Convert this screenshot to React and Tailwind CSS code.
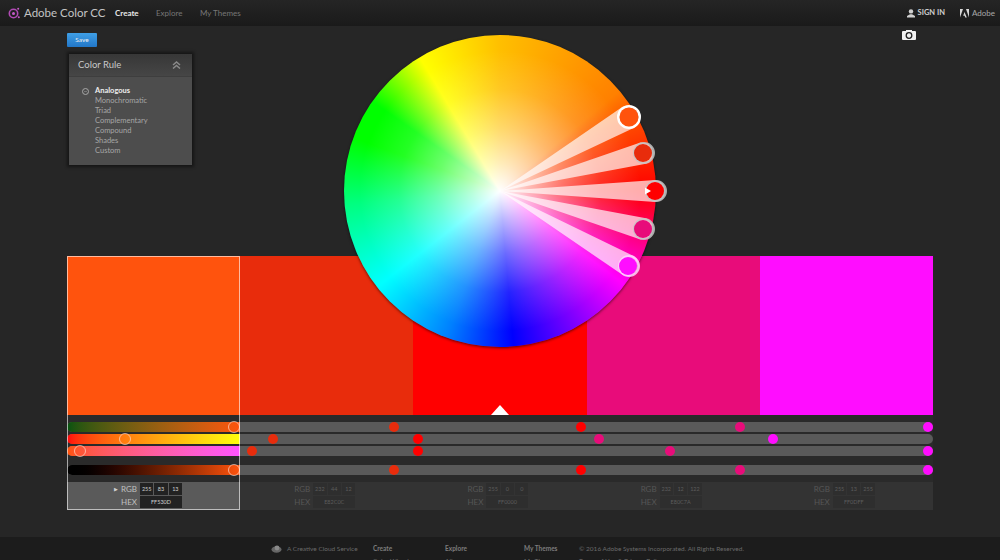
import React from "react";

const swatches = [
  { hex: "FF530D", rgb: [255, 83, 13], bg: "bg-[#ff530d]" },
  { hex: "E82C0C", rgb: [232, 44, 12], bg: "bg-[#e82c0c]" },
  { hex: "FF0000", rgb: [255, 0, 0], bg: "bg-[#ff0000]" },
  { hex: "E80C7A", rgb: [232, 12, 122], bg: "bg-[#e80c7a]" },
  { hex: "FF0DFF", rgb: [255, 13, 255], bg: "bg-[#ff0dff]" },
];

const rules = ["Analogous", "Monochromatic", "Triad", "Complementary", "Compound", "Shades", "Custom"];

// dot centres in px from the left edge of the slider track
const sliders = [
  { gradient: "bg-gradient-to-r from-[#005310] to-[#ff530d]", mt: "mt-[7px]", dots: [167, 327, 514, 673, 861] },
  { gradient: "bg-gradient-to-r from-[#ff000d] to-[#ffff0d]", mt: "mt-[2px]", dots: [58, 206, 351, 532, 706] },
  { gradient: "bg-gradient-to-r from-[#ff5300] to-[#ff53ff]", mt: "mt-[2px]", dots: [13, 185, 351, 603, 861] },
  { gradient: "bg-gradient-to-r from-[#000000] to-[#ff530d]", mt: "mt-[9px]", dots: [167, 327, 514, 673, 861] },
];
const dotColors = ["", "#e82c0c", "#ff0000", "#e80c7a", "#ff0dff"];

const handles = [
  { x: 129, y: -74, fill: "#ff530d", ring: "#ffffff", ringOpacity: 1, width: 2.5, fx: 0, r: 12 },
  { x: 144, y: -38, fill: "#e82c0c", ring: "#c4c4c4", ringOpacity: 0.85, width: 2, fx: -1, r: 11 },
  { x: 156, y: 0, fill: "#ff0000", ring: "#c4c4c4", ringOpacity: 0.85, width: 2, fx: -1, r: 11 },
  { x: 144, y: 38, fill: "#e80c7a", ring: "#c4c4c4", ringOpacity: 0.85, width: 2, fx: -1, r: 11 },
  { x: 129, y: 75, fill: "#ff0dff", ring: "#ffd0ff", ringOpacity: 0.85, width: 2, fx: -1, r: 11 },
];

const wedgePath = ({ x, y, r }) => {
  const d = Math.hypot(x, y);
  const a = Math.atan2(y, x);
  const half = Math.asin(r / d);
  const len = Math.sqrt(d * d - r * r);
  const ax = len * Math.cos(a - half);
  const ay = len * Math.sin(a - half);
  const bx = len * Math.cos(a + half);
  const by = len * Math.sin(a + half);
  return `M0 0L${ax} ${ay}A${r} ${r} 0 0 1 ${bx} ${by}Z`;
};

const Wheel = () => (
  <div className="absolute left-[344px] top-[35px] w-[312px] h-[312px] rounded-full shadow-[0_1px_3px_rgba(0,0,0,0.6)] bg-[conic-gradient(from_0deg,#ffbf00_0deg,#ff8000_50deg,#ff5300_60deg,#ff0000_90deg,#ff00ff_127deg,#8000ff_150deg,#0000ff_175deg,#0080ff_200deg,#00ffff_232deg,#00ff80_265deg,#00ff00_290deg,#00ff00_305deg,#ffff00_329deg,#ffbf00_360deg)]">
    <div className="w-full h-full rounded-full bg-[radial-gradient(circle_closest-side,rgba(255,255,255,1)_0%,rgba(255,255,255,0.72)_18%,rgba(255,255,255,0.42)_40%,rgba(255,255,255,0.14)_65%,rgba(255,255,255,0)_90%)]" />
    <svg className="absolute left-0 top-0 overflow-visible" width="312" height="312" viewBox="-156 -156 312 312">
      {handles.map((h) => (
        <path key={h.fill} d={wedgePath(h)} fill="#ffffff" fillOpacity="0.68" />
      ))}
      {handles.map((h) => (
        <g key={h.fill}>
          <circle cx={h.x} cy={h.y} r={h.r - h.width / 2} fill="none" stroke={h.ring} strokeOpacity={h.ringOpacity} strokeWidth={h.width} />
          <circle cx={h.x + h.fx} cy={h.y} r={h.r - h.width} fill={h.fill} />
        </g>
      ))}
      <path d="M145 -3.5L151 0L145 3.5Z" fill="#ffffff" />
    </svg>
  </div>
);

const NavLink = ({ children, active }) => (
  <span className={active ? "text-[#e8e8e8] font-bold" : "text-[#777777]"}>{children}</span>
);

const Header = () => (
  <div className="h-[26px] flex items-center justify-between bg-gradient-to-b from-[#252525] to-[#1a1a1a] text-[8px]">
    <div className="flex items-center">
      <svg className="ml-[8px]" width="12" height="14" viewBox="0 0 12 14">
        <circle cx="5.5" cy="7.5" r="4.2" fill="none" stroke="#b04ab4" strokeWidth="1.6" />
        <circle cx="5.5" cy="7.5" r="1.5" fill="#c65ac8" />
        <circle cx="10.2" cy="2.8" r="1" fill="#c65ac8" />
        <circle cx="10.8" cy="11.2" r="1" fill="#c65ac8" />
      </svg>
      <span className="ml-[4px] w-[91px] text-[11.5px] text-[#c4c4c4]">Adobe Color CC</span>
      <div className="w-[41px]"><NavLink active>Create</NavLink></div>
      <div className="w-[44px]"><NavLink>Explore</NavLink></div>
      <NavLink>My Themes</NavLink>
    </div>
    <div className="flex items-center mr-[5px]">
      <svg width="8" height="9" viewBox="0 0 8 9" fill="#d0d0d0">
        <circle cx="4" cy="2.4" r="2.2" />
        <path d="M0 8.5V7L3 5.2H5L8 7V8.5Z" />
      </svg>
      <span className="ml-[3px] text-[#d0d0d0] font-bold text-[7.5px]">SIGN IN</span>
      <svg className="ml-[15px]" width="9" height="9" viewBox="0 0 9 9" fill="#d8d8d8">
        <path d="M0 0H3L0 8.5Z" />
        <path d="M6 0H9V8.5Z" />
        <path d="M4.5 3L6.8 8.5H5.3L4.6 6.8H3.2Z" />
      </svg>
      <span className="ml-[3px] text-[#a8a8a8]">Adobe</span>
    </div>
  </div>
);

const ColorRule = () => (
  <div className="ml-[2px] mt-[7px] w-[123px] h-[111px] bg-[#4d4d4d] shadow-[0_0_3px_2px_rgba(0,0,0,0.45)]">
    <div className="h-[23px] flex items-center justify-between pl-[9px] pr-[11px] bg-gradient-to-b from-[#373737] to-[#464646] border-b border-[#3e3e3e]">
      <span className="text-[9.5px] text-[#c8c8c8]">Color Rule</span>
      <svg width="9" height="8" viewBox="0 0 9 8" fill="none" stroke="#8a8a8a" strokeWidth="1.5">
        <path d="M1 4L4.5 1L8 4" />
        <path d="M1 7.5L4.5 4.5L8 7.5" />
      </svg>
    </div>
    <div className="flex pl-[13px] pt-[9px]">
      <div className="w-[7px] h-[7px] mt-[2px] rounded-full border border-[#a8a8a8] flex items-center justify-center">
        <div className="w-[3px] h-[1px] bg-[#777777]" />
      </div>
      <ul className="ml-[6px] text-[7.5px] leading-[10px] text-[#a6a6a6]">
        {rules.map((rule, index) => (
          <li key={rule} className={index === 0 ? "text-[#eeeeee] font-bold" : ""}>{rule}</li>
        ))}
      </ul>
    </div>
  </div>
);

const Camera = () => (
  <svg className="-mt-[3px] mr-[17px]" width="14" height="10" viewBox="0 0 14 10">
    <rect x="0" y="1" width="14" height="9" rx="1" fill="#f2f2f2" />
    <rect x="4" y="0" width="6" height="2" fill="#f2f2f2" />
    <circle cx="7" cy="5.5" r="2.8" fill="none" stroke="#222222" strokeWidth="1.3" />
  </svg>
);

const Slider = ({ gradient, mt, dots }) => (
  <div className={`relative h-[10px] rounded-full bg-[#5a5a5a] ${mt}`}>
    <div className={`w-[173px] h-full rounded-l-full ${gradient}`} />
    {dots.map((left, index) => (
      <div
        key={left + "_" + index}
        className={
          index === 0
            ? "absolute -top-[1px] w-[12px] h-[12px] -ml-[6px] rounded-full border border-[#ffd9c8]/70"
            : "absolute top-0 w-[10px] h-[10px] -ml-[5px] rounded-full"
        }
        style={index === 0 ? { left } : { left, backgroundColor: dotColors[index] }}
      />
    ))}
  </div>
);

const ValueBox = ({ children, width, active }) => (
  <div className={`${width} h-[12px] flex items-center justify-center text-[5.5px] ${active ? "bg-[#222222] text-[#d0d0d0]" : "bg-[#2e2e2e] text-[#5c5c5c]"}`}>
    {children}
  </div>
);

const ColorValues = ({ swatch, active }) => (
  <div className={`flex-1 flex justify-start pt-[1px] ${active ? "bg-[#5a5a5a]" : "bg-[#333333]"}`}>
    <div className={`w-[70px] flex flex-col items-end text-[8px] leading-[13px] ${active ? "text-[#c0c0c0]" : "text-[#565656]"}`}>
      <div className="flex items-center">
        {active && <span className="mr-[3px] text-[5px] text-[#d0d0d0]">▶</span>}
        RGB
      </div>
      <div>HEX</div>
    </div>
    <div className="ml-[3px] w-[42px] flex flex-col gap-[1px]">
      <div className="flex gap-[1px]">
        {swatch.rgb.map((value, index) => (
          <ValueBox key={index} width="flex-1" active={active}>{value}</ValueBox>
        ))}
      </div>
      <ValueBox width="w-full" active={active}>{swatch.hex}</ValueBox>
    </div>
  </div>
);

const Footer = () => (
  <div className="h-[23px] mt-[27px] bg-[#1c1c1c] flex text-[6.5px] leading-[11px] text-[#6a6a6a] pt-[6px]">
    <svg className="ml-[271px] mt-[2px]" width="11" height="8" viewBox="0 0 11 8" fill="#666666">
      <ellipse cx="5.5" cy="4.5" rx="5" ry="3.2" />
      <circle cx="6" cy="3" r="2.4" fill="#8a8a8a" />
    </svg>
    <div className="ml-[5px] w-[86px]">A Creative Cloud Service</div>
    <div className="w-[72px]">
      <div className="font-bold text-[#7c7c7c]">Create</div>
      <div className="mt-[1px]">Color Wheel</div>
    </div>
    <div className="w-[79px]">
      <div className="font-bold text-[#7c7c7c]">Explore</div>
      <div className="mt-[1px]">All</div>
    </div>
    <div className="w-[55px]">
      <div className="font-bold text-[#7c7c7c]">My Themes</div>
      <div className="mt-[1px]">My Themes</div>
    </div>
    <div>
      <div>© 2016 Adobe Systems Incorporated. All Rights Reserved.</div>
      <div className="mt-[1px]">Terms of Use &amp; Privacy Policy</div>
    </div>
  </div>
);

const App = () => (
  <div className="relative w-[1000px] h-[560px] overflow-hidden bg-[#262626] font-['Lato',sans-serif]">
    <Header />
    <div className="px-[67px]">
      <div className="h-[230px] pt-[7px] flex justify-between items-start">
        <div>
          <button className="block w-[30px] h-[14px] rounded-[1px] bg-gradient-to-b from-[#3f9fe6] to-[#2277c8] text-[6.5px] text-[#f0f0f0]">
            Save
          </button>
          <ColorRule />
        </div>
        <Camera />
      </div>
      <div className="relative">
        <div className="flex h-[159px]">
          {swatches.map((swatch) => (
            <div key={swatch.hex} className={`flex-1 ${swatch.bg}`} />
          ))}
        </div>
        <div className="h-[67px] flex flex-col bg-[#2a2a2a]">
          {sliders.map((slider, index) => (
            <Slider key={index} {...slider} />
          ))}
        </div>
        <div className="flex h-[28px]">
          {swatches.map((swatch, index) => (
            <ColorValues key={swatch.hex} swatch={swatch} active={index === 0} />
          ))}
        </div>
        <div className="absolute left-0 top-0 bottom-0 w-[173px] border border-[#ffffff]/60" />
        <div className="absolute left-[424px] top-[149px] w-0 h-0 border-x-[9px] border-x-transparent border-b-[10px] border-b-white" />
      </div>
    </div>
    <Footer />
    <Wheel />
  </div>
);

export default App;
